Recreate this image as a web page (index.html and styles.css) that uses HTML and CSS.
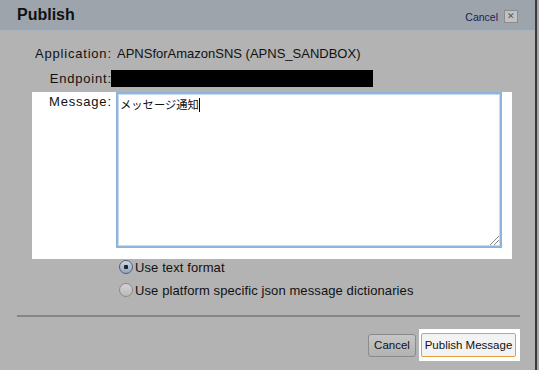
FILE: index.html
```html
<!DOCTYPE html>
<html lang="ja">
<head>
  <meta charset="UTF-8" />
  <title>Publish</title>
  <link rel="stylesheet" href="styles.css">
</head>
<body>
  <div class="dialog">
    <div class="titlebar">
      <h2>Publish</h2>
      <span class="close-link">Cancel</span>
      <span class="close-box">&#x2715;</span>
    </div>

    <div class="content">
      <div class="fields">
        <span class="label">Application:</span>
        <span class="value">APNSforAmazonSNS (APNS_SANDBOX)</span>

        <span class="label endpoint">Endpoint:</span>
        <span class="redacted"></span>

        <div class="message-row">
          <span class="label">Message:</span>
          <div class="textarea">メッセージ通知<span class="caret"></span><span class="grip"></span></div>
        </div>
      </div>

      <div class="formats">
        <label class="radio"><span class="dot checked"></span>Use text format</label>
        <label class="radio"><span class="dot"></span>Use platform specific json message dictionaries</label>
      </div>

      <hr class="sep">

      <div class="actions">
        <button class="btn">Cancel</button>
        <span class="highlight"><button class="btn primary">Publish Message</button></span>
      </div>
    </div>
  </div>
</body>
</html>
```

FILE: styles.css
```css
* { box-sizing: border-box; }

body {
  margin: 0;
  background: #a8a8a8;
  font-family: "Liberation Sans", Arial, sans-serif;
  color: #111;
}

.dialog {
  width: 537px;
  height: 370px;
  background: #b3b3b3;
  border-right: 2px solid #3a3a3a;
}

.titlebar {
  display: flex;
  align-items: center;
  height: 31px;
  padding: 0 17px 0 17px;
  background: #9da4ac;
  border-bottom: 1px solid #aab3bc;
}

.titlebar h2 {
  flex: 1;
  margin: 0;
  font-size: 16px;
  font-weight: bold;
  color: #111;
}

.close-link {
  font-size: 10.5px;
  color: #1c1c52;
  margin-top: 3px;
}

.close-box {
  width: 14px;
  height: 13px;
  margin: 3px 0 0 6px;
  background: #c2c2c2;
  border: 1px solid #8c8c8c;
  color: #555;
  font-size: 9px;
  line-height: 11px;
  text-align: center;
}

.content {
  padding: 15px 15px 0 17px;
}

.fields {
  display: grid;
  grid-template-columns: 79px 1fr;
  column-gap: 5px;
  margin-left: 15px;
  width: 480px;
  font-size: 13px;
  line-height: 16px;
}

.label {
  text-align: right;
  color: #111;
  letter-spacing: 0.8px;
  margin-right: -0.8px;
}

.value {
  margin-left: 1px;
}

.label.endpoint {
  margin-top: 8px;
  line-height: 17px;
}

.redacted {
  margin: 8px 0 0 -5px;
  width: 262px;
  height: 17px;
  background: #000;
}

.message-row {
  grid-column: 1 / 3;
  display: grid;
  grid-template-columns: 79px 1fr;
  column-gap: 5px;
  margin-top: 5px;
  padding: 0 10px 11px 0;
  background: #fff;
}

.message-row .label {
  padding-top: 2px;
}

.textarea {
  position: relative;
  height: 156px;
  padding: 3px 2px;
  border: 2px solid #8fb4dc;
  box-shadow: inset 0 0 0 1px #c7daee;
  font-family: "Liberation Sans", "Noto Sans CJK JP", sans-serif;
  font-size: 11.3px;
  line-height: 16px;
}

.caret {
  display: inline-block;
  width: 1px;
  height: 14px;
  background: #000;
  vertical-align: -3px;
}

.grip {
  position: absolute;
  right: 1px;
  bottom: 1px;
  width: 9px;
  height: 9px;
  background: linear-gradient(135deg, transparent 45%, #888 45%, #888 52%, transparent 52%, transparent 70%, #888 70%, #888 77%, transparent 77%);
}

.formats {
  display: flex;
  flex-direction: column;
  gap: 7px;
  margin: 0 0 0 102px;
  font-size: 13px;
  letter-spacing: 0.1px;
}

.radio {
  display: flex;
  align-items: center;
  height: 16px;
  gap: 2px;
}

.dot {
  width: 14px;
  height: 14px;
  border-radius: 50%;
  border: 1px solid #8a8a8a;
  background: linear-gradient(#d4d4d4, #b9b9b9);
}

.dot.checked {
  border-color: #556070;
  background: radial-gradient(circle, #222 0 2px, transparent 2.5px), linear-gradient(#cbd6e6, #93a5bf);
}

.sep {
  margin: 17px 0 0;
  border: 0;
  border-top: 2px solid #858585;
}

.actions {
  display: flex;
  justify-content: flex-end;
  align-items: center;
  gap: 3px;
  margin-top: 12px;
}

.btn {
  width: 48px;
  height: 23px;
  padding: 0;
  font-family: "Liberation Sans", Arial, sans-serif;
  font-size: 11.5px;
  color: #111;
  background: linear-gradient(#c6c6c6, #b2b2b2);
  border: 1px solid #8a8a8a;
  border-radius: 3px;
}

.highlight {
  display: flex;
  padding: 4px 4px 4px 2px;
  background: #fff;
}

.btn.primary {
  width: 95px;
  height: 24px;
  background: #f3f3f3;
  border: 1px solid #e4a040;
  border-radius: 2px;
}
```
